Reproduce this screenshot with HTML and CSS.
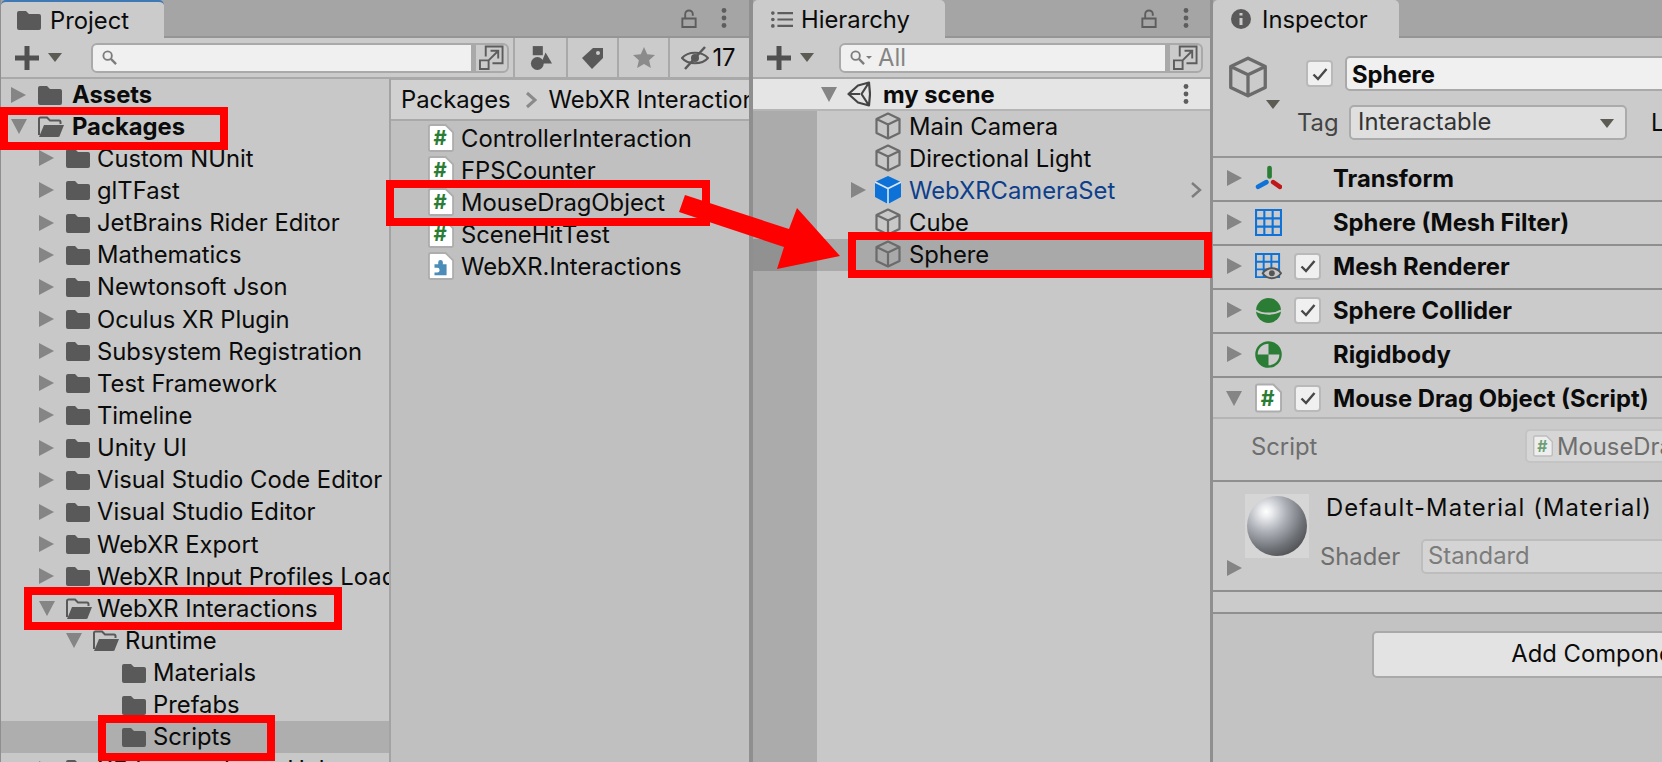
FILE: index.html
```html
<!DOCTYPE html>
<html>
<head>
<title>Unity Editor Panels</title>
<link rel="stylesheet" href="styles.css">
</head>
<body>

<svg class="sprites" xmlns="http://www.w3.org/2000/svg">
    <symbol id="folder" viewBox="0 0 24 24"><path d="M0 5a2 2 0 0 1 2-2h7l3 3h10a2 2 0 0 1 2 2v12a2 2 0 0 1-2 2H2a2 2 0 0 1-2-2z" fill="#595959"/></symbol>
    <symbol id="folder-open" viewBox="0 0 27 24"><path d="M1 21V5a1.500 1.500 0 0 1 1.500-1.500h6.500l3 3h9a1.500 1.500 0 0 1 1.500 1.500v2" fill="none" stroke="#595959" stroke-width="2"/><path d="M6 11h20l-4 10a2 2 0 0 1-2 2H1z" fill="#595959"/></symbol>
    <symbol id="script" viewBox="0 0 28 30"><path d="M3 1h16l8 8v18a2 2 0 0 1-2 2H3a2 2 0 0 1-2-2V3a2 2 0 0 1 2-2z" fill="#fff" stroke="#adadad" stroke-width="2"/><text x="13" y="23" text-anchor="middle" class="hash">#</text></symbol>
    <symbol id="package" viewBox="0 0 28 30"><path d="M3 1h16l8 8v18a2 2 0 0 1-2 2H3a2 2 0 0 1-2-2V3a2 2 0 0 1 2-2z" fill="#fff" stroke="#adadad" stroke-width="2"/><path d="M7 13h4v-2a2.500 2.500 0 0 1 5 0v2h4v12H7v-3h3a2.500 2.500 0 0 0 0-5H7z" fill="#4b8db8"/></symbol>
    <symbol id="cube" viewBox="0 0 26 28"><path d="M13 1.500 24.500 7v14L13 26.500 1.500 21V7zM1.500 7 13 12.500 24.500 7M13 12.500v14" fill="none" stroke="#6b6b6b" stroke-width="2.200" stroke-linejoin="round"/></symbol>
    <symbol id="cube-blue" viewBox="0 0 26 28"><path d="M13 0 26 6v15l-13 7-13-7V6z" fill="#0c72d8"/><path d="M0 6l13 6.500L26 6M13 12.500V28" fill="none" stroke="#d8e6f5" stroke-width="1.600"/></symbol>
    <symbol id="unity" viewBox="0 0 24 26"><path d="M1.500 13 11 4.500 22 1.500 23 13 22 24.500 11 21.500zM1.500 13H13M22 1.500 14.500 13 22 24.500" fill="none" stroke="#444" stroke-width="2.200" stroke-linejoin="round"/></symbol>
    <symbol id="lock" viewBox="0 0 16 20"><path d="M1 10h14v9H1zM4 10V5.500a4 4 0 0 1 8 0V7" fill="none" stroke="#5d5d5d" stroke-width="2"/></symbol>
    <symbol id="dots" viewBox="0 0 6 20"><circle cx="3" cy="2.500" r="2.400" fill="#5d5d5d"/><circle cx="3" cy="10" r="2.400" fill="#5d5d5d"/><circle cx="3" cy="17.500" r="2.400" fill="#5d5d5d"/></symbol>
    <symbol id="plus" viewBox="0 0 24 24"><path d="M12 0v24M0 12h24" stroke="#505050" stroke-width="5"/></symbol>
    <symbol id="search" viewBox="0 0 16 16"><circle cx="6" cy="6" r="4.500" fill="none" stroke="#7c7c7c" stroke-width="2"/><path d="M9.500 9.500 15 15" stroke="#7c7c7c" stroke-width="2.500"/></symbol>
    <symbol id="popout" viewBox="0 0 26 26"><path d="M7 12V1.500h17.500V19H14" fill="none" stroke="#5d5d5d" stroke-width="2"/><path d="M1 16h9v9H1zM10 16l9-9M12 6h8v8" fill="none" stroke="#5d5d5d" stroke-width="2"/></symbol>
    <symbol id="check" viewBox="0 0 16 14"><path d="M1.500 7.500 6 12 14.500 2" fill="none" stroke="#484848" stroke-width="2.400"/></symbol>
    <symbol id="grid" viewBox="0 0 26 26"><path d="M1 1h24v24H1zM1 9h24M1 17h24M9 1v24M17 1v24" fill="none" stroke="#0f72d6" stroke-width="2"/></symbol>
</svg>

<div class="editor">
    <section class="panel project">
        <div class="tabbar">
            <div class="tab tab-project"><svg class="tab-icon"><use href="#folder"/></svg>Project</div>
            <svg class="lock"><use href="#lock"/></svg>
            <svg class="dots"><use href="#dots"/></svg>
        </div>
        <div class="toolbar">
            <svg class="plus"><use href="#plus"/></svg>
            <span class="caret"></span>
            <div class="search search-project">
                <svg class="search-icon"><use href="#search"/></svg>
            </div>
            <div class="popout"><svg><use href="#popout"/></svg></div>
            <div class="filter filter-type">
                <svg viewBox="0 0 24 26"><path d="M3 0h11v10H3z" fill="#595959"/><circle cx="8" cy="19" r="7" fill="#595959"/><path d="M17 7l7 12H12z" fill="#595959"/></svg>
            </div>
            <div class="filter">
                <svg viewBox="0 0 22 22"><path d="M0 11 11 1h10v10L10 22z" fill="#595959"/><circle cx="16" cy="6" r="2" fill="#cbcbcb"/></svg>
            </div>
            <div class="filter">
                <svg viewBox="0 0 24 24"><path d="M12 0l3.500 8 8.500.8-6.400 5.600 1.900 8.600L12 18.500 4.500 23l1.900-8.600L0 8.800 8.500 8z" fill="#8b8b8b"/></svg>
            </div>
            <div class="filter filter-count">
                <svg viewBox="0 0 28 24"><path d="M1 12c6-7 20-7 26 0-6 7-20 7-26 0z" fill="none" stroke="#595959" stroke-width="2"/><circle cx="14" cy="12" r="4" fill="#595959"/><path d="M4 23 24 1" stroke="#595959" stroke-width="2.500"/></svg>
                <span>17</span>
            </div>
        </div>
        <div class="browser">
            <div class="tree">
                <div class="row lvl-0 root"><span class="twisty closed"></span><svg class="folder"><use href="#folder"/></svg><span>Assets</span></div>
                <div class="row lvl-0 root"><span class="twisty open"></span><svg class="folder-open"><use href="#folder-open"/></svg><span>Packages</span></div>
                <div class="row lvl-1"><span class="twisty closed"></span><svg class="folder"><use href="#folder"/></svg><span>Custom NUnit</span></div>
                <div class="row lvl-1"><span class="twisty closed"></span><svg class="folder"><use href="#folder"/></svg><span>glTFast</span></div>
                <div class="row lvl-1"><span class="twisty closed"></span><svg class="folder"><use href="#folder"/></svg><span>JetBrains Rider Editor</span></div>
                <div class="row lvl-1"><span class="twisty closed"></span><svg class="folder"><use href="#folder"/></svg><span>Mathematics</span></div>
                <div class="row lvl-1"><span class="twisty closed"></span><svg class="folder"><use href="#folder"/></svg><span>Newtonsoft Json</span></div>
                <div class="row lvl-1"><span class="twisty closed"></span><svg class="folder"><use href="#folder"/></svg><span>Oculus XR Plugin</span></div>
                <div class="row lvl-1"><span class="twisty closed"></span><svg class="folder"><use href="#folder"/></svg><span>Subsystem Registration</span></div>
                <div class="row lvl-1"><span class="twisty closed"></span><svg class="folder"><use href="#folder"/></svg><span>Test Framework</span></div>
                <div class="row lvl-1"><span class="twisty closed"></span><svg class="folder"><use href="#folder"/></svg><span>Timeline</span></div>
                <div class="row lvl-1"><span class="twisty closed"></span><svg class="folder"><use href="#folder"/></svg><span>Unity UI</span></div>
                <div class="row lvl-1"><span class="twisty closed"></span><svg class="folder"><use href="#folder"/></svg><span>Visual Studio Code Editor</span></div>
                <div class="row lvl-1"><span class="twisty closed"></span><svg class="folder"><use href="#folder"/></svg><span>Visual Studio Editor</span></div>
                <div class="row lvl-1"><span class="twisty closed"></span><svg class="folder"><use href="#folder"/></svg><span>WebXR Export</span></div>
                <div class="row lvl-1"><span class="twisty closed"></span><svg class="folder"><use href="#folder"/></svg><span>WebXR Input Profiles Loader</span></div>
                <div class="row lvl-1"><span class="twisty open"></span><svg class="folder-open"><use href="#folder-open"/></svg><span>WebXR Interactions</span></div>
                <div class="row lvl-2"><span class="twisty open"></span><svg class="folder-open"><use href="#folder-open"/></svg><span>Runtime</span></div>
                <div class="row lvl-3"><span class="twisty"></span><svg class="folder"><use href="#folder"/></svg><span>Materials</span></div>
                <div class="row lvl-3"><span class="twisty"></span><svg class="folder"><use href="#folder"/></svg><span>Prefabs</span></div>
                <div class="row lvl-3 selected"><span class="twisty"></span><svg class="folder"><use href="#folder"/></svg><span>Scripts</span></div>
                <div class="row lvl-1"><span class="twisty closed"></span><svg class="folder"><use href="#folder"/></svg><span>XR Legacy Input Helpers</span></div>
            </div>
            <div class="files">
                <div class="breadcrumb"><span>Packages</span><svg class="chevron" viewBox="0 0 12 18"><path d="M2 2l8 7-8 7" fill="none" stroke="#8a8a8a" stroke-width="3"/></svg><span>WebXR Interactions</span></div>
                <div class="file"><svg class="file-icon"><use href="#script"/></svg><span>ControllerInteraction</span></div>
                <div class="file"><svg class="file-icon"><use href="#script"/></svg><span>FPSCounter</span></div>
                <div class="file"><svg class="file-icon"><use href="#script"/></svg><span>MouseDragObject</span></div>
                <div class="file"><svg class="file-icon"><use href="#script"/></svg><span>SceneHitTest</span></div>
                <div class="file"><svg class="file-icon"><use href="#package"/></svg><span>WebXR.Interactions</span></div>
            </div>
        </div>
    </section>

    <section class="panel hierarchy">
        <div class="tabbar">
            <div class="tab tab-hierarchy">
                <svg class="tab-icon-list" viewBox="0 0 24 18"><path d="M7 2h17M7 9h17M7 16h17" stroke="#5d5d5d" stroke-width="2.400"/><circle cx="2" cy="2" r="2" fill="#5d5d5d"/><circle cx="2" cy="9" r="2" fill="#5d5d5d"/><circle cx="2" cy="16" r="2" fill="#5d5d5d"/></svg>Hierarchy
            </div>
            <svg class="lock"><use href="#lock"/></svg>
            <svg class="dots"><use href="#dots"/></svg>
        </div>
        <div class="toolbar">
            <svg class="plus"><use href="#plus"/></svg>
            <span class="caret"></span>
            <div class="search search-hierarchy">
                <svg class="search-icon"><use href="#search"/></svg>
                <span class="search-caret"></span>
                <span class="placeholder">All</span>
            </div>
            <div class="popout"><svg><use href="#popout"/></svg></div>
        </div>
        <div class="scene-header">
            <span class="twisty open"></span>
            <svg class="unity"><use href="#unity"/></svg>
            <span class="scene-name">my scene</span>
            <svg class="dots"><use href="#dots"/></svg>
        </div>
        <div class="scene-list">
            <div class="node"><span class="twisty"></span><svg class="cube"><use href="#cube"/></svg><span>Main Camera</span></div>
            <div class="node"><span class="twisty"></span><svg class="cube"><use href="#cube"/></svg><span>Directional Light</span></div>
            <div class="node prefab"><span class="twisty closed"></span><svg class="cube"><use href="#cube-blue"/></svg><span>WebXRCameraSet</span><svg class="chevron-right" viewBox="0 0 12 18"><path d="M2 2l8 7-8 7" fill="none" stroke="#7d7d7d" stroke-width="2.400"/></svg></div>
            <div class="node"><span class="twisty"></span><svg class="cube"><use href="#cube"/></svg><span>Cube</span></div>
            <div class="node node-selected"><span class="twisty"></span><svg class="cube"><use href="#cube"/></svg><span>Sphere</span></div>
        </div>
    </section>

    <section class="panel inspector">
        <div class="tabbar">
            <div class="tab tab-inspector">
                <svg class="tab-icon-info" viewBox="0 0 20 20"><circle cx="10" cy="10" r="10" fill="#595959"/><path d="M10 4v2.500M10 9v7" stroke="#cbcbcb" stroke-width="3"/></svg>Inspector
            </div>
        </div>
        <div class="object-header">
            <div class="object-icon">
                <svg class="object-cube"><use href="#cube"/></svg>
                <span class="caret"></span>
            </div>
            <div class="object-fields">
                <div class="name-row">
                    <span class="checkbox"><svg><use href="#check"/></svg></span>
                    <div class="name-field">Sphere</div>
                </div>
                <div class="tag-row">
                    <span class="tag-label">Tag</span>
                    <div class="dropdown">Interactable<span class="caret"></span></div>
                    <span class="layer-label">Layer</span>
                </div>
            </div>
        </div>

        <div class="component"><span class="twisty closed"></span>
            <svg class="comp-icon" viewBox="0 0 26 26"><path d="M14 3v8" stroke="#2b7d35" stroke-width="4.500" stroke-linecap="round"/><path d="M3 21l8-4.500" stroke="#0f72d6" stroke-width="4.500" stroke-linecap="round"/><path d="M17.500 16.500 24 21" stroke="#c01818" stroke-width="4.500" stroke-linecap="round"/></svg>
            <span class="comp-check-slot"></span><b>Transform</b></div>
        <div class="component"><span class="twisty closed"></span>
            <svg class="comp-icon"><use href="#grid"/></svg>
            <span class="comp-check-slot"></span><b>Sphere (Mesh Filter)</b></div>
        <div class="component"><span class="twisty closed"></span>
            <svg class="comp-icon" viewBox="0 0 28 28"><path d="M1 1h24v24H1zM1 9h24M1 17h24M9 1v24M17 1v24" fill="none" stroke="#0f72d6" stroke-width="2"/><path d="M8 21c5-7 14-7 19 0-5 7-14 7-19 0z" fill="#c8c8c8" stroke="#555" stroke-width="2"/><circle cx="17.500" cy="21" r="3" fill="#555"/></svg>
            <span class="comp-check-slot"><span class="checkbox"><svg><use href="#check"/></svg></span></span><b>Mesh Renderer</b></div>
        <div class="component"><span class="twisty closed"></span>
            <svg class="comp-icon" viewBox="0 0 26 26"><circle cx="13" cy="13" r="12" fill="#2b7d35"/><path d="M1 13c6 4 18 4 24 0" fill="none" stroke="#c8c8c8" stroke-width="2"/></svg>
            <span class="comp-check-slot"><span class="checkbox"><svg><use href="#check"/></svg></span></span><b>Sphere Collider</b></div>
        <div class="component"><span class="twisty closed"></span>
            <svg class="comp-icon" viewBox="0 0 28 28"><circle cx="14" cy="14" r="12.500" fill="none" stroke="#2b7d35" stroke-width="2.500"/><path d="M14 14V1.500A12.500 12.500 0 0 1 26.500 14zM14 14v12.500A12.500 12.500 0 0 1 1.500 14z" fill="#2b7d35"/></svg>
            <span class="comp-check-slot"></span><b>Rigidbody</b></div>
        <div class="component component-open"><span class="twisty open"></span>
            <svg class="comp-icon comp-script"><use href="#script"/></svg>
            <span class="comp-check-slot"><span class="checkbox"><svg><use href="#check"/></svg></span></span><b>Mouse Drag Object (Script)</b></div>
        <div class="script-row">
            <span class="script-label">Script</span>
            <div class="script-field"><svg><use href="#script"/></svg><span>MouseDragObject</span></div>
        </div>
        <div class="material">
            <span class="twisty closed"></span>
            <div class="preview"><div class="ball"></div></div>
            <div class="material-info">
                <div class="material-name">Default-Material (Material)</div>
                <div class="shader-row"><span class="shader-label">Shader</span><div class="shader-field">Standard</div></div>
            </div>
        </div>
        <div class="material-footer"></div>
        <div class="add-wrap"><div class="add-btn">Add Component</div></div>
    </section>

    <!-- annotations drawn over the screenshot -->
    <div class="mark mark-packages"></div>
    <div class="mark mark-drag"></div>
    <div class="mark mark-interactions"></div>
    <div class="mark mark-scripts"></div>
    <div class="mark mark-sphere"></div>
    <svg class="arrow" viewBox="0 0 1662 762"><path d="M685 195 789 229 797 208 840 256 777 269 784 247 679 212z" fill="#ff0000"/></svg>
</div>

</body>
</html>
```

FILE: styles.css
```css
* {
    box-sizing: border-box;
}
body {
    margin: 0;
    background: #8f8f8f;
    font-family: Inter, "Noto Sans", sans-serif;
    font-size: 23.8px;
    color: #0b0b0b;
    overflow: hidden;
}
.sprites {
    display: none;
}
.hash {
    font-family: Inter, sans-serif;
    font-size: 22px;
    font-weight: 700;
    fill: #2b7d35;
}
.editor {
    position: relative;
    display: flex;
    width: 1662px;
    height: 762px;
    overflow: hidden;
    background: #8f8f8f;
}
.panel {
    display: flex;
    flex-direction: column;
    height: 762px;
    overflow: hidden;
    background: #cbcbcb;
}
.project {
    width: 748px;
    margin-left: 1px;
}
.hierarchy {
    width: 457px;
    margin-left: 4px;
}
.inspector {
    width: 449px;
    margin-left: 3px;
}

/* tabs */
.tabbar {
    position: relative;
    display: flex;
    flex: none;
    height: 38px;
    background: #a5a5a5;
    border-bottom: 2px solid #959595;
}
.tab {
    display: flex;
    align-items: center;
    height: 38px;
    background: #cbcbcb;
    border-radius: 5px 5px 0 0;
}
.tab-project {
    width: 163px;
    padding-left: 16px;
    border-top: 2px solid #3f79b5;
}
.tab-hierarchy {
    width: 192px;
    padding-left: 18px;
}
.tab-inspector {
    width: 186px;
    padding-left: 18px;
}
.tab-icon {
    width: 24px;
    height: 24px;
    margin-right: 9px;
}
.tab-icon-list {
    width: 22px;
    height: 17px;
    margin-right: 8px;
}
.tab-icon-info {
    width: 20px;
    height: 20px;
    margin-right: 11px;
}
.lock {
    position: absolute;
    top: 9px;
    width: 16px;
    height: 19px;
}
.project .lock {
    left: 680px;
}
.hierarchy .lock {
    left: 388px;
}
.dots {
    width: 6px;
    height: 20px;
}
.tabbar .dots {
    position: absolute;
    top: 8px;
}
.project .dots {
    left: 720px;
}
.hierarchy .tabbar .dots {
    left: 430px;
}

/* toolbars */
.toolbar {
    display: flex;
    flex: none;
    align-items: center;
    height: 41px;
    border-bottom: 2px solid #a9a9a9;
}
.plus {
    flex: none;
    width: 24px;
    height: 24px;
    margin-left: 14px;
}
.caret {
    flex: none;
    width: 0;
    height: 0;
    border-left: 7px solid transparent;
    border-right: 7px solid transparent;
    border-top: 9px solid #5c5c54;
}
.toolbar .caret {
    margin-left: 9px;
}
.search {
    display: flex;
    align-items: center;
    height: 30px;
    padding-left: 9px;
    background: #f0f0f0;
    border: 2px solid #a9a9a9;
    border-radius: 6px 0 0 6px;
}
.search-project {
    width: 382px;
    margin-left: 29px;
}
.search-hierarchy {
    width: 328px;
    margin-left: 25px;
}
.search-icon {
    width: 15px;
    height: 15px;
}
.search-caret {
    width: 0;
    height: 0;
    margin-left: 1px;
    border-left: 3px solid transparent;
    border-right: 3px solid transparent;
    border-top: 3px solid #7c7c7c;
}
.placeholder {
    margin-left: 6px;
    color: #858585;
}
.popout {
    display: flex;
    flex: none;
    align-items: center;
    justify-content: center;
    width: 36px;
    height: 30px;
    background: #cbcbcb;
    border: 2px solid #a9a9a9;
    border-left-width: 3px;
    border-radius: 0 6px 6px 0;
}
.popout svg {
    width: 25px;
    height: 25px;
}
.filter {
    display: flex;
    flex: none;
    align-items: center;
    justify-content: center;
    width: 51px;
    height: 39px;
    border-left: 2px solid #a9a9a9;
}
.filter svg {
    width: 22px;
    height: 24px;
}
.filter-type {
    width: 53px;
    margin-left: 4px;
}
.filter-count {
    width: 79px;
    border-right: 0;
}
.filter-count svg {
    width: 28px;
    margin-right: 3px;
}

/* project browser */
.browser {
    display: flex;
    flex: 1;
    min-height: 0;
}
.tree {
    flex: none;
    width: 390px;
    overflow: hidden;
    background: #c8c8c8;
    border-right: 2px solid #a3a3a3;
}
.row {
    display: flex;
    align-items: center;
    height: 32.15px;
    white-space: nowrap;
}
.row:first-child {
    height: 31.15px;
}
.lvl-0 {
    padding-left: 10px;
}
.lvl-1 {
    padding-left: 38px;
}
.lvl-2 {
    padding-left: 65px;
}
.lvl-3 {
    padding-left: 94px;
}
.lvl-2 span:last-child {
    margin-left: 1px;
}
.selected {
    background: #aeaeae;
}
.root {
    font-weight: 700;
}
.twisty {
    flex: none;
    width: 16px;
    height: 18px;
}
.twisty.closed {
    width: 0;
    height: 0;
    margin-right: 1px;
    border-top: 8px solid transparent;
    border-bottom: 8px solid transparent;
    border-left: 15px solid #858585;
}
.twisty.open {
    width: 0;
    height: 0;
    margin-right: 0;
    border-left: 8px solid transparent;
    border-right: 8px solid transparent;
    border-top: 15px solid #858585;
}
.folder {
    flex: none;
    width: 24px;
    height: 24px;
    margin: 0 7px 0 11px;
}
.folder-open {
    flex: none;
    width: 27px;
    height: 24px;
    margin: 0 4px 0 11px;
}
.root span:last-child {
    margin-left: 3px;
}
.files {
    flex: 1;
    min-width: 0;
    overflow: hidden;
    background: #c0c0c0;
}
.breadcrumb {
    display: flex;
    align-items: center;
    height: 42px;
    padding-left: 10px;
    background: #d1d1d1;
    border-top: 1px solid #a9a9a9;
    border-bottom: 2px solid #a9a9a9;
    white-space: nowrap;
}
.chevron {
    flex: none;
    width: 12px;
    height: 18px;
    margin: 0 12px 0 14px;
}
.file {
    display: flex;
    align-items: center;
    height: 32px;
    margin-top: 1px;
    margin-bottom: -1px;
    padding-left: 37px;
}
.file-icon {
    flex: none;
    width: 26px;
    height: 30px;
    margin-right: 7px;
}

/* hierarchy */
.scene-header {
    display: flex;
    flex: none;
    align-items: center;
    height: 32px;
    padding-left: 68px;
    background: #e5e5e5;
    border-bottom: 2px solid #b5b5b5;
}
.unity {
    width: 24px;
    height: 26px;
    margin-left: 10px;
}
.scene-name {
    flex: 1;
    margin-left: 12px;
    font-weight: 700;
}
.scene-header .dots {
    margin-right: 21px;
}
.scene-list {
    flex: 1;
    background: #c8c8c8;
    border-left: 64px solid #ababab;
}
.node {
    position: relative;
    display: flex;
    align-items: center;
    height: 32.1px;
    padding: 0 0 2px 34px;
    white-space: nowrap;
}
.node-selected {
    background: #a9a9a9;
}
.node-selected::before {
    content: "";
    position: absolute;
    left: -64px;
    top: 0;
    bottom: 0;
    width: 64px;
    background: #919191;
}
.cube {
    flex: none;
    width: 26px;
    height: 28px;
    margin: 0 8px 0 8px;
}
.prefab {
    color: #0e3f8c;
}
.chevron-right {
    position: absolute;
    right: 8px;
    width: 12px;
    height: 18px;
}

/* inspector */
.object-header {
    display: flex;
    flex: none;
    height: 120px;
    padding: 18px 0 0 15px;
    border-bottom: 2px solid #959595;
}
.object-icon {
    position: relative;
    flex: none;
    width: 69px;
}
.object-cube {
    width: 40px;
    height: 42px;
}
.object-icon .caret {
    position: absolute;
    left: 38px;
    top: 44px;
}
.object-fields {
    flex: none;
    width: 700px;
}
.name-row {
    display: flex;
    align-items: center;
    height: 35px;
}
.checkbox {
    display: flex;
    flex: none;
    align-items: center;
    justify-content: center;
    width: 27px;
    height: 27px;
    background: #f0f0f0;
    border: 2px solid #b9b9b9;
    border-radius: 4px;
}
.checkbox svg {
    width: 16px;
    height: 14px;
}
.name-row .checkbox {
    margin-left: 9px;
}
.name-field {
    flex: 1;
    height: 35px;
    margin-left: 12px;
    padding-left: 5px;
    background: #f0f0f0;
    border: 2px solid #a9a9a9;
    border-radius: 5px 0 0 5px;
    font-weight: 700;
    line-height: 34px;
}
.tag-row {
    display: flex;
    align-items: center;
    height: 35px;
    margin-top: 14px;
}
.tag-label {
    width: 52px;
    color: #444;
}
.dropdown {
    position: relative;
    flex: none;
    width: 278px;
    height: 35px;
    padding-left: 7px;
    background: #dfdfdf;
    border: 2px solid #ababab;
    border-radius: 5px;
    line-height: 29px;
    color: #333;
}
.dropdown .caret {
    position: absolute;
    right: 11px;
    top: 12px;
}
.layer-label {
    margin-left: 24px;
}
.component {
    display: flex;
    flex: none;
    align-items: center;
    height: 44px;
    padding: 0 0 2px 14px;
    border-bottom: 2px solid #8f8f8f;
    white-space: nowrap;
}
.component .twisty.open {
    margin-left: -1px;
    margin-right: 1px;
}
.comp-icon {
    flex: none;
    width: 27px;
    height: 27px;
    margin-left: 12px;
}
.comp-script {
    height: 30px;
}
.comp-check-slot {
    flex: none;
    width: 51px;
    padding-left: 12px;
}
.component-open {
    height: 41px;
    padding: 1px 0 0 14px;
    border-bottom: 2px solid #b5b5b5;
}
.script-row {
    display: flex;
    flex: none;
    align-items: center;
    height: 63px;
    padding: 0 0 7px 38px;
    color: #6e6e6e;
    border-bottom: 2px solid #8f8f8f;
}
.script-label {
    flex: none;
    width: 274px;
}
.script-field {
    display: flex;
    flex: none;
    align-items: center;
    width: 300px;
    height: 34px;
    padding-left: 6px;
    background: #d6d6d6;
    border: 2px solid #c4c4c4;
    border-radius: 5px 0 0 5px;
}
.script-field svg {
    width: 20px;
    height: 24px;
    margin-right: 4px;
    opacity: 0.6;
}
.material {
    position: relative;
    display: flex;
    flex: none;
    height: 110px;
    padding: 12px 0 0 32px;
    border-bottom: 2px solid #8f8f8f;
}
.material .twisty {
    position: absolute;
    left: 14px;
    top: 78px;
}
.preview {
    flex: none;
    width: 64px;
    height: 64px;
    padding: 2px;
    background: #d6d6d6;
}
.ball {
    width: 60px;
    height: 60px;
    border-radius: 50%;
    background: radial-gradient(circle at 32% 26%, #ffffff 0, #eceef0 9%, #acafb6 34%, #6f7277 62%, #2f2f30 100%);
}
.material-info {
    flex: none;
    width: 420px;
    white-space: nowrap;
}
.material-name {
    margin-left: 17px;
    line-height: 27px;
    letter-spacing: 1.1px;
}
.shader-row {
    display: flex;
    align-items: center;
    margin-top: 18px;
    margin-left: 11px;
}
.shader-label {
    flex: none;
    width: 101px;
    color: #6e6e6e;
}
.shader-field {
    flex: none;
    width: 300px;
    height: 35px;
    padding-left: 5px;
    background: #d4d4d4;
    border: 2px solid #bdbdbd;
    border-radius: 5px 0 0 5px;
    color: #7c7c7c;
    line-height: 29px;
}
.material-footer {
    flex: none;
    height: 22px;
    border-bottom: 2px solid #8f8f8f;
}
.add-wrap {
    flex: 1;
    padding: 17px 0 0 159px;
    background: #c3c3c3;
}
.add-btn {
    width: 462px;
    height: 47px;
    background: #e3e3e3;
    border: 2px solid #a9a9a9;
    border-radius: 5px;
    line-height: 42px;
    text-align: center;
}

/* red annotations */
.mark {
    position: absolute;
    border: 8px solid #ff0000;
}
.mark-packages {
    left: 0;
    top: 107px;
    width: 228px;
    height: 43px;
}
.mark-drag {
    left: 386px;
    top: 180px;
    width: 324px;
    height: 46px;
}
.mark-interactions {
    left: 24px;
    top: 587px;
    width: 318px;
    height: 43px;
}
.mark-scripts {
    left: 98px;
    top: 715px;
    width: 177px;
    height: 46px;
}
.mark-sphere {
    left: 848px;
    top: 232px;
    width: 364px;
    height: 46px;
}
.arrow {
    position: absolute;
    left: 0;
    top: 0;
    width: 1662px;
    height: 762px;
}
```
